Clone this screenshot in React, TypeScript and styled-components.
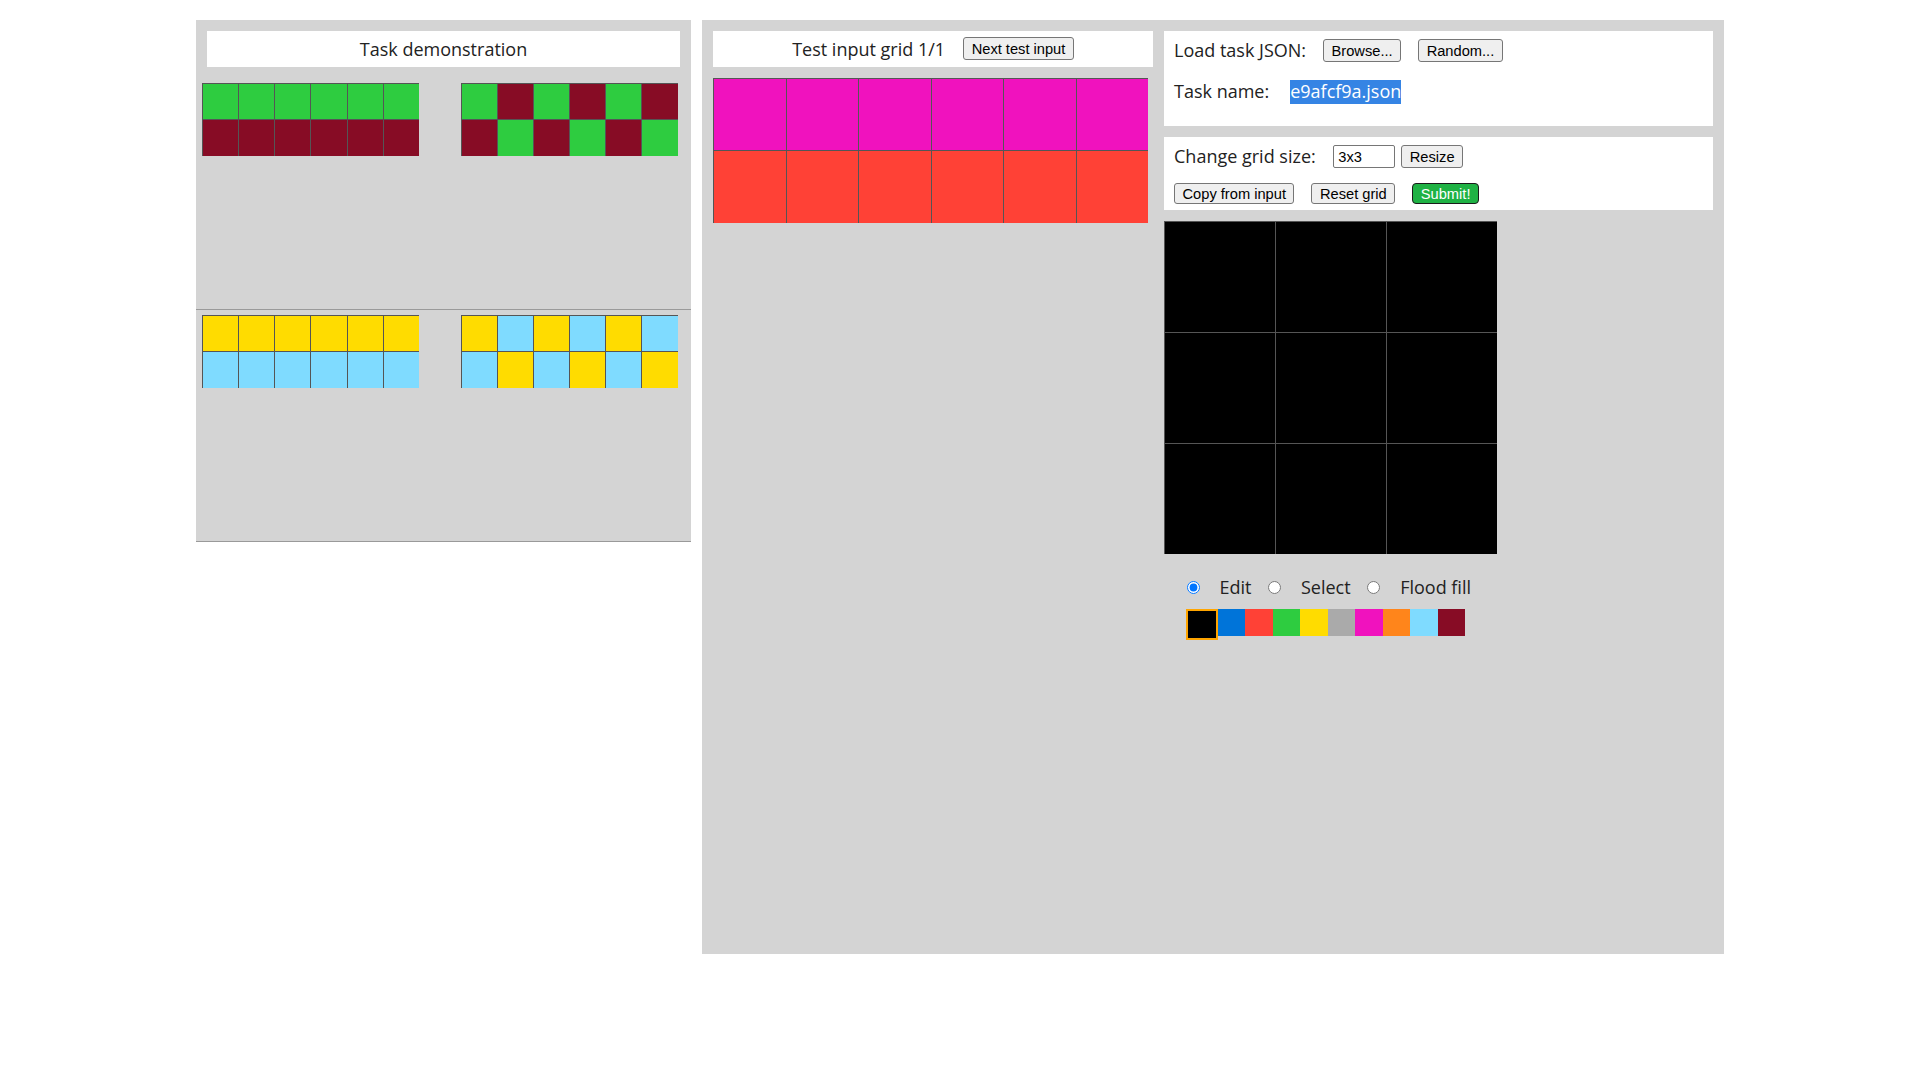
import styled, { createGlobalStyle } from "styled-components"

const COLORS = [
	"#000000",
	"#0074D9",
	"#FF4136",
	"#2ECC40",
	"#FFDC00",
	"#AAAAAA",
	"#F012BE",
	"#FF851B",
	"#7FDBFF",
	"#870C25",
]

const pairs = [
	{
		input: [
			[3, 3, 3, 3, 3, 3],
			[9, 9, 9, 9, 9, 9],
		],
		output: [
			[3, 9, 3, 9, 3, 9],
			[9, 3, 9, 3, 9, 3],
		],
	},
	{
		input: [
			[4, 4, 4, 4, 4, 4],
			[8, 8, 8, 8, 8, 8],
		],
		output: [
			[4, 8, 4, 8, 4, 8],
			[8, 4, 8, 4, 8, 4],
		],
	},
]

const testInput = [
	[6, 6, 6, 6, 6, 6],
	[2, 2, 2, 2, 2, 2],
]

const testOutput = [
	[0, 0, 0],
	[0, 0, 0],
	[0, 0, 0],
]

type GridProps = {
	data: number[][]
	width: number
	height: number
}

function Grid({ data, width, height }: GridProps) {
	const cols = data[0].length
	const rows = data.length
	return (
		<GridBox $w={width} $h={height} $cols={cols} $rows={rows}>
			{data.map((row, r) =>
				row.map((v, c) => <Cell key={r + "-" + c} $color={COLORS[v]} />)
			)}
		</GridBox>
	)
}

export default function App() {
	return (
		<>
			<GlobalStyle />
			<Workspace>
				<DemoPanel>
					<PanelTitle>Task demonstration</PanelTitle>
					{pairs.map((p, i) => (
						<PairRow key={i}>
							<Grid data={p.input} width={218} height={73} />
							<Grid data={p.output} width={217} height={73} />
						</PairRow>
					))}
				</DemoPanel>

				<EvalPanel>
					<InputCol>
						<PanelTitle>
							<span>Test input grid 1/1</span>
							<Button>Next test input</Button>
						</PanelTitle>
						<GridWrap>
							<Grid data={testInput} width={435} height={145} />
						</GridWrap>
					</InputCol>

					<OutputCol>
						<LoadBox>
							<Row>
								<Label>Load task JSON:</Label>
								<Button $ml={17}>Browse...</Button>
								<Button $ml={17}>Random...</Button>
							</Row>
							<Row $mt={18}>
								<Label>Task name:</Label>
								<TaskName>e9afcf9a.json</TaskName>
							</Row>
						</LoadBox>

						<EditBox>
							<Row>
								<Label>Change grid size:</Label>
								<SizeInput defaultValue="3x3" />
								<Button $ml={6}>Resize</Button>
							</Row>
							<Row $mt={15}>
								<Button $short>Copy from input</Button>
								<Button $short $ml={17}>
									Reset grid
								</Button>
								<SubmitButton $short $ml={17}>
									Submit!
								</SubmitButton>
							</Row>
						</EditBox>

						<GridWrap>
							<Grid data={testOutput} width={333} height={333} />
						</GridWrap>

						<Tools>
							<Radio type="radio" name="tool" defaultChecked />
							<ToolLabel>Edit</ToolLabel>
							<Radio type="radio" name="tool" />
							<ToolLabel>Select</ToolLabel>
							<Radio type="radio" name="tool" />
							<ToolLabel>Flood fill</ToolLabel>
						</Tools>

						<Palette>
							{COLORS.map((c, i) => (
								<Swatch key={c} $color={c} $selected={i === 0} />
							))}
						</Palette>
					</OutputCol>
				</EvalPanel>
			</Workspace>
		</>
	)
}

const GlobalStyle = createGlobalStyle`
	body {
		margin: 0;
		background: #ffffff;
		font-family: "Open Sans", "Noto Sans", sans-serif;
		color: #222;
	}
`

const Workspace = styled.div`
	display: flex;
	align-items: flex-start;
	gap: 11px;
	width: 1528px;
	margin: 20px auto 0;
`

const DemoPanel = styled.div`
	width: 495px;
	background: #d4d4d4;
	padding-top: 11px;
`

const PanelTitle = styled.div`
	display: flex;
	align-items: center;
	justify-content: center;
	gap: 18px;
	height: 35.5px;
	margin: 0 11px;
	background: #ffffff;
	font-size: 18px;
	color: #222;
	box-sizing: border-box;
`

const PairRow = styled.div`
	display: flex;
	gap: 41px;
	height: 232px;
	margin-top: 11px;
	padding: 5px 0 0 5.5px;
	border-bottom: 1px solid #9a9a9a;
	box-sizing: border-box;

	& + & {
		margin-top: 0;
	}
`

const GridBox = styled.div<{ $w: number; $h: number; $cols: number; $rows: number }>`
	display: grid;
	grid-template-columns: repeat(${(p) => p.$cols}, 1fr);
	grid-template-rows: repeat(${(p) => p.$rows}, 1fr);
	width: ${(p) => p.$w}px;
	height: ${(p) => p.$h}px;
	flex-shrink: 0;
`

const Cell = styled.div<{ $color: string }>`
	background: ${(p) => p.$color};
	border-top: 1px solid #555;
	border-left: 1px solid #555;
	box-sizing: border-box;
`

const EvalPanel = styled.div`
	display: flex;
	gap: 11px;
	width: 1022px;
	height: 934px;
	padding: 11px;
	background: #d4d4d4;
	box-sizing: border-box;
`

const InputCol = styled.div`
	width: 440px;
	flex-shrink: 0;

	${PanelTitle} {
		margin: 0;
	}
`

const GridWrap = styled.div`
	margin-top: 11px;
`

const OutputCol = styled.div`
	width: 549px;
	flex-shrink: 0;
`

const WhiteBox = styled.div`
	background: #ffffff;
	padding: 8px 10px;
	box-sizing: border-box;
`

const LoadBox = styled(WhiteBox)`
	height: 95px;
`

const EditBox = styled(WhiteBox)`
	height: 73px;
	margin-top: 11px;
`

const Row = styled.div<{ $mt?: number }>`
	display: flex;
	align-items: center;
	margin-top: ${(p) => p.$mt || 0}px;
`

const Label = styled.span`
	font-size: 18px;
	line-height: 23px;
	color: #222;
	margin-right: 0;
`

const TaskName = styled.span`
	margin-left: 21px;
	font-size: 18px;
	line-height: 23.5px;
	background: #3584e4;
	color: #ffffff;
`

const Button = styled.button<{ $ml?: number; $short?: boolean }>`
	height: ${(p) => (p.$short ? 21 : 22.7)}px;
	margin: 0 0 0 ${(p) => p.$ml || 0}px;
	padding: 0 7.5px;
	font-family: "Liberation Sans", Arial, sans-serif;
	font-size: 14.67px;
	color: #000;
	background: #efefef;
	border: 1px solid #767676;
	border-radius: 3px;
	white-space: nowrap;
`

const SubmitButton = styled(Button)`
	background: #1fb244;
	color: #ffffff;
	border: 1px solid #1b1b1b;
	border-radius: 4px;
`

const SizeInput = styled.input`
	width: 62px;
	height: 22.7px;
	margin-left: 17.5px;
	padding: 1px 4px;
	font-family: "Liberation Sans", Arial, sans-serif;
	font-size: 14.67px;
	color: #000;
	border: 1px solid #767676;
	border-radius: 2px;
	box-sizing: border-box;
`

const Tools = styled.div`
	display: flex;
	align-items: center;
	height: 24px;
	margin-top: 21px;
	padding-left: 22.5px;
`

const Radio = styled.input`
	width: 13px;
	height: 13px;
	margin: 0 20px 0 0;
`

const ToolLabel = styled.span`
	font-size: 18px;
	color: #222;
	margin-right: 16.5px;
`

const Palette = styled.div`
	display: flex;
	align-items: flex-start;
	margin-top: 10px;
	padding-left: 22px;
`

const Swatch = styled.div<{ $color: string; $selected: boolean }>`
	width: 27.5px;
	height: 27px;
	background: ${(p) => p.$color};
	border: ${(p) => (p.$selected ? "2px solid orange" : "none")};
`
